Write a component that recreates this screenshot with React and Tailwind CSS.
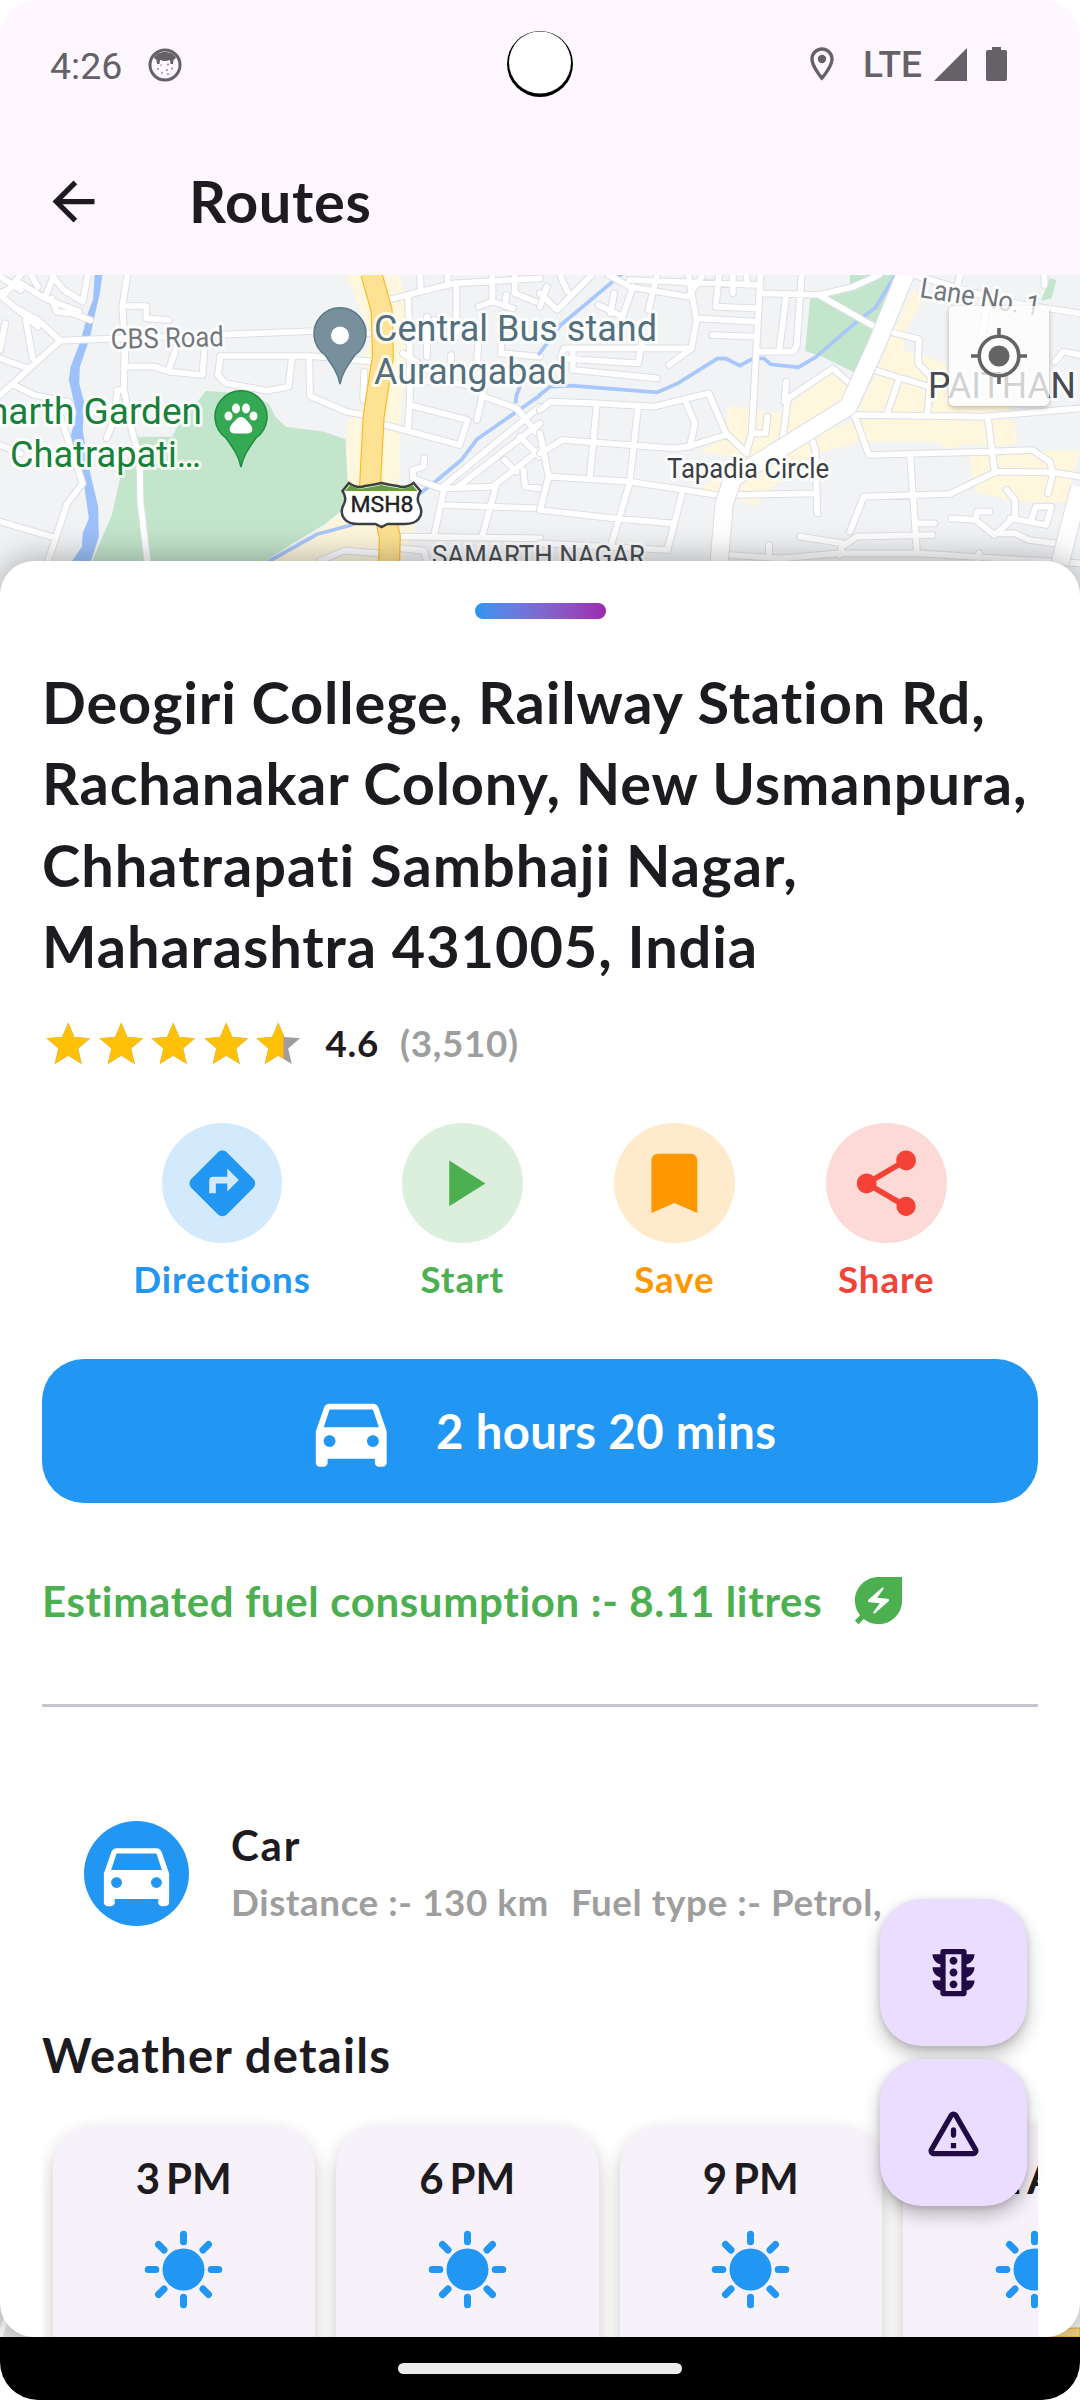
import React from "react";
import {
  MdArrowBack,
  MdDirections,
  MdPlayArrow,
  MdBookmark,
  MdShare,
  MdDirectionsCar,
  MdEnergySavingsLeaf,
  MdOutlineTraffic,
  MdOutlineLocationOn,
} from "react-icons/md";

const STAR = "M12 17.27L18.18 21l-1.64-7.03L22 9.24l-7.19-.61L12 2 9.19 8.63 2 9.24l5.46 4.73L5.82 21z";

/* Map tiles are drawn in two tile-local coordinate spaces. */
const WEST_ROADS = [
  "M0 75 L40 110 L110 150 L175 212 L920 183 L1080 190",
  "M0 70 L60 40 L130 85 L230 125 M130 85 L155 20 M0 20 L60 60 M40 110 L110 170 M150 15 L185 60 L240 95 L255 15 M60 15 L15 70 M110 50 L90 15",
  "M150 85 L165 125 L210 130 L262 150 M75 150 L95 265 M0 265 L75 293 M175 212 L0 375 M40 345 L100 375 L200 395 M0 240 L15 160",
  "M370 15 L355 110 L362 210 L360 360 L385 490 L405 560 L408 700 L428 872",
  "M365 108 L425 108 L425 145 L490 150 M365 210 L362 290 L450 290 L490 305 L588 315 L595 215 M490 300 L515 225",
  "M1085 275 L900 258 L640 258 L633 315 L655 340 L775 362 L838 350 L848 260 M898 262 L900 378 L1005 425 L1060 435",
  "M360 360 L340 360 L335 440 L310 505 M175 440 L240 640 L195 700 L140 872 M0 755 L150 800 M0 525 L60 550",
  "M1125 90 L1320 40 L1568 25 M1185 80 L1190 250 L1190 400 L1185 475 M1120 465 L1335 525 L1358 450 L1190 405 M1220 15 L1222 65 M1325 40 L1325 200 M1390 110 L1430 95 L1430 20 M1300 15 L1300 45 M1430 95 L1490 115 M1470 75 L1468 95 M1495 15 L1495 70 L1568 100",
  "M1170 250 L1300 335 L1405 355 L1385 450 M1405 380 L1500 415 L1568 500 M1200 330 L1300 340 M1240 140 L1240 260 M1260 150 L1330 180 M1390 200 L1385 290 M1460 130 L1455 250 L1568 260 M1310 255 L1310 330",
  "M1568 410 L1280 655 L1200 625 L1198 600 L1230 590 L1232 565 M1568 460 L1330 650 M1568 540 L1430 650 L1290 655 L1262 790 M1510 500 L1568 560 M1440 650 L1400 800 M1520 600 L1525 650 L1568 655 M1280 705 L1568 715",
  "M1170 800 L1568 805 M930 872 L1000 842 L1100 850 M1058 305 L1055 390 M1165 835 L1230 842 L1240 872 M1465 570 L1500 605",
];

const EAST_ROADS = [
  "M200 15 L260 50 L430 80 L470 20 M0 70 L50 120 L150 15 M260 30 L640 45 L640 70 L820 75 M270 50 L240 140 L170 105 M340 15 L315 120 M0 110 L20 50 M60 20 L80 65 M430 15 L455 150 L440 235 L70 235 L60 265 L285 280 L300 200 M520 15 L510 110 L625 115 M560 70 L560 15 M600 15 L600 45 M460 145 L620 155 M500 195 L625 200 M440 235 L375 285 M100 300 L340 325 M95 235 L95 300 M215 70 L205 130",
  "M640 15 L615 490 L600 545 M760 15 L745 230 L735 245 L635 245 M715 75 L695 240 M615 490 L655 490 L660 440",
  "M810 75 L980 175 L1100 208 L1098 280 L1135 320 L1125 430 M810 75 L910 50 L985 15 M970 300 L1130 350 M1040 335 L1010 425 M905 345 L850 295 L720 385 L705 500 M715 335 L710 395",
  "M0 420 L30 395 L165 400 L330 410 L490 370 L540 490 L600 550 M425 400 L450 460 L435 530 M165 400 L145 620 M285 410 L260 640 L205 830 M0 550 L65 510 L390 535 L430 530 L540 495 M0 490 L25 620 L0 720 M25 620 L260 635 L515 675 M0 720 L215 745 L380 760 M415 660 L370 840 M0 820 L370 840",
  "M570 675 L800 670 M790 510 L800 540 L805 730 M915 440 L955 555 L1310 545 L1430 540 L1480 575 L1490 610 L1475 670 M1300 440 L1320 600 M910 435 L1290 440 L1568 415 M1075 560 L1095 850 M1568 620 L1490 607 L1325 605 L1190 672 L940 680 L900 785",
  "M755 800 L880 820 L870 855 M885 825 L920 800 L1140 795 M550 855 L700 865 L870 850 L1100 850 M665 825 L665 860 M1095 760 L1145 760 M1195 745 L1265 750 L1320 795 L1380 740 L1380 690 L1355 660 M1265 750 L1270 725 L1305 725 M1365 745 L1470 765 L1485 710 L1440 710 L1425 755 M1320 790 L1380 790 L1420 810 L1495 820",
  "M1085 15 L1350 95 L1568 130 M1220 15 L1200 95 M1300 100 L1280 210 M1465 15 L1465 45 M1495 275 L1520 245 L1568 255 M1100 850 L1568 880 M1270 872 L1275 850",
];

function Roads({ paths }) {
  const d = paths.join(" ");
  return (
    <g fill="none" strokeLinecap="round" strokeLinejoin="round">
      <path d={d} stroke="#dddfe5" strokeWidth="23" />
      <path d={d} stroke="#ffffff" strokeWidth="17" />
    </g>
  );
}

function MapLabel({ x, y, size, len, color, anchor, rotate, children }) {
  return (
    <text
      x={x}
      y={y}
      fontSize={size}
      textLength={len}
      lengthAdjust="spacingAndGlyphs"
      fill={color}
      textAnchor={anchor}
      transform={rotate ? `rotate(${rotate} ${x} ${y})` : undefined}
      stroke="#ffffff"
      strokeOpacity="0.8"
      strokeWidth="6"
      strokeLinejoin="round"
      paintOrder="stroke"
    >
      {children}
    </text>
  );
}

function CityMap() {
  return (
    <svg className="absolute inset-0 h-full w-full font-['Roboto',sans-serif] font-normal" viewBox="0 0 1080 2062">
      <rect width="1080" height="2062" fill="#f1f3f5" />
      <g transform="translate(0 -5) scale(0.34435 0.33333)">
        <path fill="#fef6dd" d="M1005 15H1160L1175 70 1190 250 1165 400 1160 640 1205 780 1170 880H760L900 810 1000 715 1010 450 1065 400 1045 290 1080 200Z" />
        <path fill="#c3e5cb" d="M598 363 700 370 780 400 800 440 830 470 940 485 1003 508 1010 640 1000 715 940 765 850 820 760 880H265L325 735 350 620 400 500 500 500 520 460 570 400Z" />
        <path fill="#9dc1fb" d="M275 15H297L290 70 272 150 262 200 232 290 230 340 245 400 240 480 260 600 285 710 287 800 262 880H205L238 830 240 790 258 745 245 650 205 500 222 430 200 330 205 290 235 210 255 130 270 90Z" />
        <path fill="none" stroke="#a8c7fa" strokeWidth="11" d="M770 880 920 793 1020 765 1220 670 1270 630 1340 570 1385 508 1500 425 1570 375M1530 300 1500 375 1497 400" />
        <Roads paths={WEST_ROADS} />
        <path fill="none" stroke="#f9bb2d" strokeWidth="64" d="M1078 10 1108 120 1112 260 1085 440 1075 640 1115 720 1132 800 1130 880" />
        <path fill="none" stroke="#fde293" strokeWidth="57" d="M1078 10 1108 120 1112 260 1085 440 1075 640 1115 720 1132 800 1130 880" />
      </g>
      <g transform="translate(540 -5) scale(0.34435 0.33333)">
        <path fill="#c3e5cb" d="M900 15H1035L980 180 915 308 820 260 770 243 785 80 900 60ZM1480 25 1500 30 1485 85 1455 92Z" />
        <path fill="#fef6dd" d="M1085 55 1110 90 1060 190 1055 240 1180 280 1200 408H1370L1365 430H920L980 300 1020 200ZM545 408 690 430 850 305 905 345 880 400 700 500 620 550 640 570 460 545 540 500ZM930 450H1375L1390 522 1310 530 1240 520 1190 540 1150 515H930L810 550 690 640 620 710 565 680 470 655 600 540 800 490ZM1245 555 1310 545 1568 540 1530 697 1380 695 1265 665Z" />
        <path fill="none" stroke="#a8c7fa" strokeWidth="11" d="M-5 378 30 350 90 347 340 367 400 340 515 266H540L580 287 620 265H650L670 283 750 292 800 262 920 155 975 112 1035 10M240 10 60 165 -5 255" />
        <Roads paths={EAST_ROADS} />
        <path fill="none" stroke="#dddfe5" strokeWidth="56" strokeLinejoin="round" d="M1062 10 975 230 895 410 560 625 535 700 520 880M1568 650 1510 880" />
        <path fill="none" stroke="#ffffff" strokeWidth="50" strokeLinejoin="round" d="M1062 10 975 230 895 410 560 625 535 700 520 880M1568 650 1510 880" />
      </g>

      <MapLabel x={111} y={74} size={28} len={113} color="#74777c" rotate={-1.5}>CBS Road</MapLabel>
      <MapLabel x={374} y={66} size={36.5} len={283} color="#54707e">Central Bus stand</MapLabel>
      <MapLabel x={374} y={109} size={36.5} len={193} color="#54707e">Aurangabad</MapLabel>
      <MapLabel x={202} y={149} size={37} color="#188038" anchor="end">marth Garden</MapLabel>
      <MapLabel x={10} y={192} size={37} len={191} color="#188038">Chatrapati…</MapLabel>
      <MapLabel x={667} y={203} size={27.5} len={162} color="#3c4043">Tapadia Circle</MapLabel>
      <MapLabel x={432} y={290} size={28} len={213} color="#4b4f54">SAMARTH NAGAR</MapLabel>
      <MapLabel x={919} y={22} size={28} len={121} color="#74777c" rotate={9}>Lane No. 1</MapLabel>
      <MapLabel x={928} y={123} size={36.5} len={148} color="#484b51">PAITHAN</MapLabel>

      <path d="M340 109C338 98 332 90 325 80a26 26 0 1 1 30 0C348 90 342 98 340 109Z" fill="#78909c" stroke="#5b7886" strokeWidth="1.5" />
      <circle cx="340" cy="60.500" r="9" fill="#fff" />
      <path d="M241 192C239 181 233 173 226 163a26 26 0 1 1 30 0C249 173 243 181 241 192Z" fill="#34a853" stroke="#1e8a41" strokeWidth="1.5" />
      <g fill="#fff">
        <ellipse cx="236" cy="133.500" rx="4" ry="5" />
        <ellipse cx="246" cy="133.500" rx="4" ry="5" />
        <ellipse cx="228.500" cy="141" rx="4" ry="4.500" />
        <ellipse cx="253.500" cy="141" rx="4" ry="4.500" />
        <path d="M241 142c4 0 6 4 9 7 5 6 1 10-3 9.500h-12c-4 .5-8-3.500-3-9.500 3-3 5-7 9-7Z" />
      </g>
      <path d="M349 208q8 6 16 3 8-1 16.500-3 8 2 16 3 8 3 16-3l7 8q-5 7-1 14 4 8-1 14-4 5-14 5-10 0-17 0l-6 3-6-3q-7 0-17 0-10 0-14-5-5-6-1-14 4-7-1-14Z" fill="#fff" stroke="#3c4043" strokeWidth="2.500" />
      <path d="M350 210q7 5 15 3 8-1 16.500-3 8 2 16 3 8 2 15-3l5 6H345Z" fill="#689f38" />
      <text x="350.500" y="236.500" fontSize="22" textLength="63" lengthAdjust="spacingAndGlyphs" fill="#202124" stroke="#202124" strokeWidth="0.400">MSH8</text>

      <path d="M0 2020H40V2062H0Z" fill="#e4e6e8" />
      <path d="M0 2062 14 2020" stroke="#fff" strokeWidth="5" />
      <path d="M1030 2062V2054L1080 2053V2062Z" fill="#f6d88a" stroke="#f0a818" strokeWidth="1" />
    </svg>
  );
}

function LocateButton() {
  return (
    <button className="absolute top-[31px] right-[31px] flex size-[100px] items-center justify-center rounded-[5px] bg-white/75 shadow-[0_2px_5px_rgba(0,0,0,0.25)]">
      <svg className="size-[60px]" viewBox="-30 -30 60 60" fill="none" stroke="#646464" strokeWidth="3.6">
        <circle r="19.800" />
        <circle r="10.500" fill="#646464" stroke="none" />
        <path d="M0-28V-20M0 28V20M-28 0H-20M28 0H20" />
      </svg>
    </button>
  );
}

function StatusBar() {
  return (
    <div className="relative flex h-[128px] items-center justify-between pr-[73px] pl-[50px] font-['Roboto',sans-serif] font-normal text-[#646167]">
      <div className="flex items-center gap-[25px]">
        <span className="mt-[3px] w-[73px] text-[37.5px] leading-[44px] whitespace-nowrap">4:26</span>
        <svg className="mt-[2px] size-[34px]" viewBox="0 0 34 34">
          <circle cx="17" cy="17" r="15" fill="none" stroke="currentColor" strokeWidth="3" />
          <path d="M6 10C9 2 25 2 28 10L25.500 12 25 16 22.500 16 22 12Q17 14 12 12L11.500 16 9 16 8.500 12Z" fill="currentColor" />
          <g fill="currentColor" fillOpacity="0.7">
            <circle cx="10" cy="21" r="1" />
            <circle cx="13" cy="17" r="0.800" />
            <circle cx="20" cy="16.500" r="1.100" />
            <circle cx="19" cy="22" r="1" />
            <circle cx="24" cy="20.500" r="1" />
            <circle cx="14" cy="25" r="0.900" />
            <circle cx="20" cy="26" r="0.900" />
          </g>
        </svg>
      </div>
      <svg className="absolute top-[30px] left-[506px] h-[68px] w-[68px]" viewBox="0 0 68 68">
        <circle cx="34" cy="34" r="33" fill="#000" />
        <circle cx="34" cy="32.500" r="31" fill="#fff" />
      </svg>
      <div className="flex items-center">
        <MdOutlineLocationOn className="size-[40px]" />
        <span className="mt-[1px] ml-[21px] w-[62px] text-[37px] leading-[44px] font-medium">LTE</span>
        <svg className="ml-[9px] h-[33px] w-[33px]" viewBox="0 0 33 33">
          <path d="M33 0V33H0Z" fill="currentColor" />
        </svg>
        <svg className="ml-[19px] h-[34px] w-[21px]" viewBox="0 0 21 34">
          <path d="M6 0H15V3H19a2 2 0 0 1 2 2V32a2 2 0 0 1-2 2H2a2 2 0 0 1-2-2V5A2 2 0 0 1 2 3H6Z" fill="currentColor" />
        </svg>
      </div>
    </div>
  );
}

function Star({ fill = 1 }) {
  return (
    <svg className="size-[52.5px]" viewBox="0 0 24 24">
      <path d={STAR} fill="#9e9e9e" />
      <svg width={24 * fill} height="24">
        <path d={STAR} fill="#ffc107" />
      </svg>
    </svg>
  );
}

function Action({ icon: Icon, label, tint, color }) {
  return (
    <div className={`flex flex-col items-center ${color}`}>
      <div className={`flex size-[120.75px] items-center justify-center rounded-full ${tint}`}>
        <Icon className="size-[78.75px]" />
      </div>
      <span className="mt-[14px] text-[36.75px] leading-[44px] tracking-[0.9px]">{label}</span>
    </div>
  );
}

function Sun() {
  return (
    <svg className="mt-[27px] size-[79px]" viewBox="-39.5 -39.5 79 79" stroke="#2196f3" strokeWidth="7" strokeLinecap="round">
      <circle r="21" fill="#2196f3" stroke="none" />
      <path d="M0-35.300V-27.700M0 35.300V27.700M-35.300 0H-27.700M35.300 0H27.700M-25-25-19.500-19.500M25-25 19.500-19.500M-25 25-19.500 19.500M25 25 19.500 19.500" />
    </svg>
  );
}

function WeatherCard({ hour, period }) {
  return (
    <div className="flex h-[300px] w-[262.5px] shrink-0 flex-col items-center rounded-[42px] bg-[#f7f1f9] pt-[28px] shadow-[0_8px_18px_rgba(0,0,0,0.22)]">
      <span className="flex gap-[6px] text-[42px] leading-[50px]">
        <span>{hour}</span>
        <span>{period}</span>
      </span>
      <Sun />
    </div>
  );
}

function Fab({ children }) {
  return (
    <button className="flex size-[147px] items-center justify-center rounded-[42px] bg-[#eaddff] text-[#220b45] shadow-[0_9px_18px_rgba(0,0,0,0.25),0_2px_6px_rgba(0,0,0,0.12)]">
      {children}
    </button>
  );
}

export default function App() {
  return (
    <div className="h-[2400px] w-[1080px] overflow-hidden bg-white font-['Lato',sans-serif] font-bold text-[#1d1b20]">
      <div className="flex h-full flex-col overflow-hidden rounded-[38px] bg-[#fef7ff]">
        <header className="h-[275px] shrink-0">
          <StatusBar />
          <div className="flex h-[147px] items-center gap-[84px] pl-[42px]">
            <MdArrowBack className="size-[63px]" />
            <h1 className="-mt-[2px] text-[57.75px] leading-[70px] tracking-[0.7px]">Routes</h1>
          </div>
        </header>

        <main className="relative h-[2062px] shrink-0 overflow-hidden">
          <CityMap />
          <LocateButton />

          <section className="relative mt-[286px] h-[1776px] overflow-hidden rounded-[34px] bg-white px-[42px] shadow-[0_0_36px_rgba(0,0,0,0.35)]">
            <div className="mx-auto mt-[42px] h-[16px] w-[131px] rounded-full bg-linear-to-r from-[#2196f3] to-[#9c27b0]" />

            <h2 className="mt-[42px] text-[57.75px] leading-[81.4px] whitespace-nowrap">
              <span className="block tracking-[0.86px]">Deogiri College, Railway Station Rd,</span>
              <span className="block tracking-[0.83px]">Rachanakar Colony, New Usmanpura,</span>
              <span className="block tracking-[1px]">Chhatrapati Sambhaji Nagar,</span>
              <span className="block tracking-[0.9px]">Maharashtra 431005, India</span>
            </h2>

            <div className="mt-[31px] flex h-[52.5px] items-center text-[36.75px] leading-[44px] tracking-[0.7px]">
              <Star />
              <Star />
              <Star />
              <Star />
              <Star fill={0.6} />
              <span className="-mt-[2px] ml-[21px]">4.6</span>
              <span className="-mt-[2px] ml-[21px] text-[#9e9e9e]">(3,510)</span>
            </div>

            <div className="mt-[52.5px] flex justify-evenly">
              <Action icon={MdDirections} label="Directions" color="text-[#2196f3]" tint="bg-[#2196f3]/20" />
              <Action icon={MdPlayArrow} label="Start" color="text-[#4caf50]" tint="bg-[#4caf50]/20" />
              <Action icon={MdBookmark} label="Save" color="text-[#ff9800]" tint="bg-[#ff9800]/20" />
              <Action icon={MdShare} label="Share" color="text-[#f44336]" tint="bg-[#f44336]/20" />
            </div>

            <button className="mt-[57.5px] flex h-[144.4px] w-full items-center justify-center gap-[38px] rounded-[42px] bg-[#2196f3] text-[47.25px] tracking-[0.4px] text-white">
              <MdDirectionsCar className="size-[94.5px]" />
              <span>2 hours 20 mins</span>
            </button>

            <div className="mt-[66px] flex h-[63px] items-center gap-[25px] text-[42px] leading-[50px] tracking-[0.64px] text-[#4caf50]">
              <span>Estimated fuel consumption :- 8.11 litres</span>
              <MdEnergySavingsLeaf className="size-[63px]" />
            </div>

            <div className="mt-[72px] h-[2.6px] bg-[#cac4d0]" />

            <div className="mt-[114.4px] flex h-[105px] gap-[42px] pl-[42px]">
              <div className="flex size-[105px] items-center justify-center rounded-full bg-[#2196f3] text-white">
                <MdDirectionsCar className="size-[87px]" />
              </div>
              <div className="-mt-[1px] flex flex-col whitespace-nowrap">
                <span className="text-[42px] leading-[50px] tracking-[1.8px]">Car</span>
                <span className="mt-[10px] flex gap-[22px] text-[36.75px] leading-[44px] tracking-[0.58px] text-[#9e9e9e]">
                  <span>Distance :- 130 km</span>
                  <span>Fuel type :- Petrol,</span>
                </span>
              </div>
            </div>

            <h3 className="mt-[100px] text-[47.25px] leading-[57px] tracking-[1.2px]">Weather details</h3>

            <div className="flex h-[254px] gap-[21px] overflow-hidden px-[10.5px] pt-[42px]">
              <WeatherCard hour="3" period="PM" />
              <WeatherCard hour="6" period="PM" />
              <WeatherCard hour="9" period="PM" />
              <WeatherCard hour="12" period="AM" />
            </div>
          </section>

          <div className="absolute top-[1624px] right-[53px] flex flex-col gap-[13px]">
            <Fab>
              <MdOutlineTraffic className="size-[63px]" />
            </Fab>
            <Fab>
              <svg className="size-[63px]" viewBox="0 0 24 24" fill="currentColor">
                <path d="M12 5.990L19.530 19H4.470L12 5.990M2.740 18c-.770 1.330.190 3 1.730 3h15.060c1.540 0 2.500-1.670 1.730-3L13.730 4.990c-.770-1.330-2.690-1.330-3.460 0L2.740 18zM11 11v2c0 .550.450 1 1 1s1-.450 1-1v-2c0-.550-.450-1-1-1s-1 .450-1 1zm0 5h2v2h-2z" />
              </svg>
            </Fab>
          </div>
        </main>

        <nav className="flex h-[63px] shrink-0 items-center justify-center bg-black">
          <div className="h-[11px] w-[284px] rounded-full bg-[#ebebeb]" />
        </nav>
      </div>
    </div>
  );
}
